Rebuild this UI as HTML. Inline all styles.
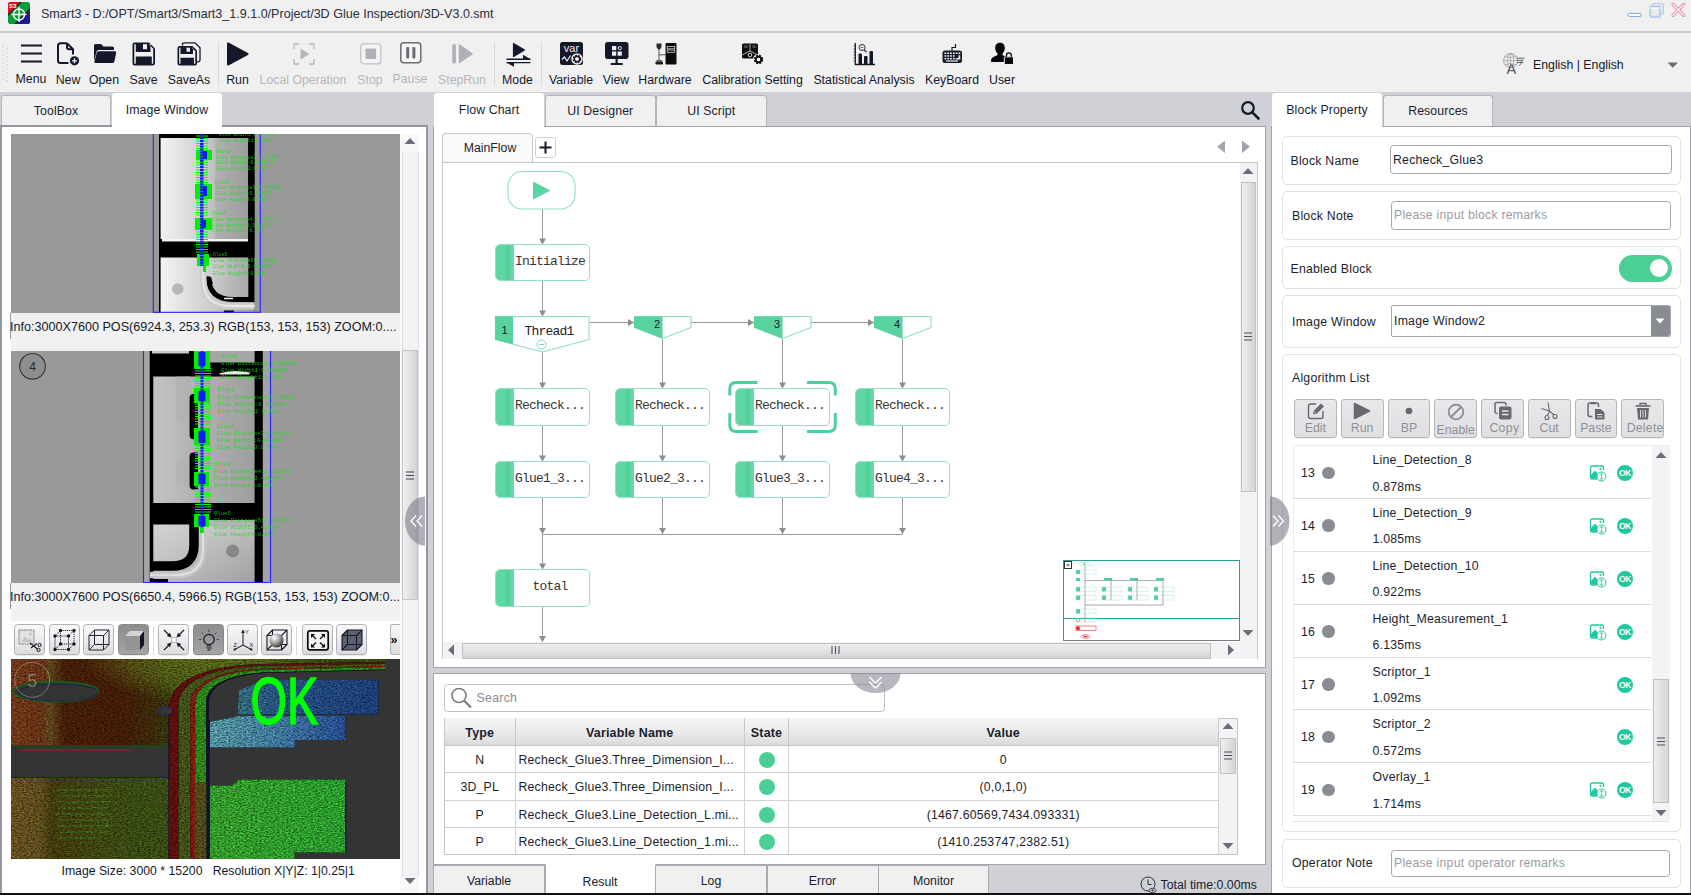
<!DOCTYPE html>
<html><head><meta charset="utf-8"><title>Smart3</title>
<style>
*{box-sizing:border-box;margin:0;padding:0}
html,body{width:1691px;height:895px;overflow:hidden;background:#f0f0f0;font-family:"Liberation Sans",sans-serif;font-size:12px;color:#1a1e2e}
.abs{position:absolute}
#root{position:relative;width:1691px;height:895px;overflow:hidden;background:#f0f0f0}
.t{position:absolute;white-space:nowrap;line-height:14px}
.tb-l{position:absolute;top:73px;font-size:12.3px;line-height:14px;white-space:nowrap;text-align:center;color:#14182a;transform:translateX(-50%)}
.tb-l.dis{color:#b4b6bc}
.tab{letter-spacing:0.100px;position:absolute;border:1px solid #b4b5bb;border-bottom:none;border-radius:3px 3px 0 0;background:#f0f0f0;text-align:center;font-size:12.3px;color:#1a1e2e;white-space:nowrap}
.tab.on{background:#fff;border-color:#fff}
.panel{position:absolute;background:#fff;border:1px solid #a9abb3}
.mono{font-family:"Liberation Mono",monospace}
svg{position:absolute;overflow:visible}
</style></head><body><div id="root">
<!-- TITLE BAR -->
<div class="abs" style="left:0;top:0;width:1691px;height:31px;background:#f0f0f0"></div>
<div class="abs" style="left:0;top:31px;width:1691px;height:2px;background:#c8c8c8"></div>
<svg style="left:8px;top:2px" width="22" height="22" viewBox="0 0 22 22">
<defs><clipPath id="lg"><rect x="0" y="0" width="22" height="22" rx="2.5"/></clipPath></defs>
<g clip-path="url(#lg)"><rect width="22" height="22" fill="#0a9a3c"/><polygon points="0,0 12,0 0,12" fill="#e01020"/><polygon points="22,8 22,22 8,22" fill="#1c1c90"/><polygon points="0,12 12,0 14,0 0,14" fill="#222"/><polygon points="8,22 22,8 22,6 6,22" fill="#222"/>
<circle cx="11" cy="12.5" r="5.5" fill="none" stroke="#fff" stroke-width="1.4"/><path d="M3.5 12.5H18.5M11 5V20" stroke="#fff" stroke-width="1.3"/></g>
<text x="1" y="6" font-size="6" font-weight="bold" fill="#fff" font-family="Liberation Sans,sans-serif">S3</text>
</svg>
<div class="t" style="left:41px;top:7px;font-size:12.550px;color:#2a2e3c">Smart3 - D:/OPT/Smart3/Smart3_1.9.1.0/Project/3D Glue Inspection/3D-V3.0.smt</div>
<!-- window controls -->
<svg style="left:1627px;top:2px" width="60" height="20" viewBox="0 0 60 20">
<rect x="0.800" y="11.400" width="13.600" height="3" rx="1.500" fill="#fff" stroke="#7aa6d8" stroke-width="1"/>
<rect x="25.600" y="1.600" width="10.800" height="10.600" rx="0.800" fill="#e0e8f0" stroke="#b4cce8" stroke-width="1"/>
<rect x="23.200" y="5" width="9.800" height="9.800" rx="0.800" fill="#ececec" stroke="#b8d0ea" stroke-width="2.200"/>
<path d="M22.500 6H33.500" stroke="#fff" stroke-width="1.200"/><path d="M22.300 4.300H33.800" stroke="#9cbce0" stroke-width="0.700"/>
<path d="M46 2.400L56.600 13.400M56.600 2.400L46 13.400" stroke="#e486b4" stroke-width="3" stroke-linecap="round"/>
<path d="M46 2.400L56.600 13.400M56.600 2.400L46 13.400" stroke="#fff" stroke-width="1.300" stroke-linecap="round"/>
</svg>
<!-- TAB STRIP BG -->
<div class="abs" style="left:0;top:92px;width:1691px;height:803px;background:#d0d1d6"></div>
<!-- TOOLBAR -->
<!-- grip -->
<svg style="left:1px;top:45px" width="9" height="38" viewBox="0 0 9 38"><g fill="#d4d4d6">
<rect x="1" y="1" width="1.500" height="1.500"/><rect x="5" y="3" width="1.500" height="1.500"/><rect x="1" y="5" width="1.500" height="1.500"/><rect x="5" y="7" width="1.500" height="1.500"/><rect x="1" y="9" width="1.500" height="1.500"/><rect x="5" y="11" width="1.500" height="1.500"/><rect x="1" y="13" width="1.500" height="1.500"/><rect x="5" y="15" width="1.500" height="1.500"/><rect x="1" y="17" width="1.500" height="1.500"/><rect x="5" y="19" width="1.500" height="1.500"/><rect x="1" y="21" width="1.500" height="1.500"/><rect x="5" y="23" width="1.500" height="1.500"/><rect x="1" y="25" width="1.500" height="1.500"/><rect x="5" y="27" width="1.500" height="1.500"/><rect x="1" y="29" width="1.500" height="1.500"/><rect x="5" y="31" width="1.500" height="1.500"/><rect x="1" y="33" width="1.500" height="1.500"/><rect x="5" y="35" width="1.500" height="1.500"/></g></svg>
<!-- Menu -->
<svg style="left:21px;top:42px" width="22" height="24" viewBox="0 0 22 24"><path d="M0 3.500H21M0 11.500H21M0 19.500H21" stroke="#14182a" stroke-width="1.800"/></svg>
<!-- New -->
<svg style="left:56px;top:42px" width="24" height="24" viewBox="0 0 24 24"><path d="M11 1.200H4.500Q2 1.200 2 3.700V18.500Q2 21 4.500 21H12.500M11 1.200L17 7.200V12.500M11 1.200V5Q11 7.200 13.200 7.200H17" fill="none" stroke="#14182a" stroke-width="2" stroke-linejoin="round"/><circle cx="18.500" cy="18.800" r="4.600" fill="#14182a"/><path d="M16 18.800H21M18.500 16.300V21.300" stroke="#f0f0f0" stroke-width="1.300"/></svg>
<!-- Open -->
<svg style="left:93px;top:42px" width="24" height="24" viewBox="0 0 24 24"><path d="M1 19V3.500Q1 2 2.500 2H8L10.500 4.500H19.500Q21 4.500 21 6V8H5.500Q4 8 3.600 9.500Z" fill="#14182a"/><path d="M5.800 9.200H22Q23.600 9.200 23.200 10.800L21.400 19.500Q21 21 19.500 21H2.500Q1 21 1.400 19.400L3.800 10.600Q4.200 9.200 5.800 9.200Z" fill="#14182a"/></svg>
<!-- Save -->
<svg style="left:132px;top:42px" width="24" height="24" viewBox="0 0 24 24"><path d="M2.500 0.500H17L23 6.500V21Q23 23.500 20.500 23.500H2.500Q0.500 23.500 0.500 21V2.500Q0.500 0.500 2.500 0.500Z" fill="#14182a"/><path d="M2.300 2.300H3.800V10H18.500V2.300H16.800L21.200 6.800V21.700H19.800V14.500H3.800V21.700H2.300Z" fill="#f0f0f0"/><rect x="11" y="2.200" width="4" height="5" fill="#f0f0f0"/></svg>
<!-- SaveAs -->
<svg style="left:177px;top:42px" width="24" height="24" viewBox="0 0 24 24"><path d="M5.500 3.500V2.500Q5.500 0.800 7.200 0.800H18L23 5.800V18Q23 19.800 21.200 19.800H20" fill="none" stroke="#14182a" stroke-width="1.300"/><path d="M2.500 4H15.500L20 8.500V21.500Q20 23.500 18 23.500H2.500Q0.500 23.500 0.500 21.500V6Q0.500 4 2.500 4Z" fill="#14182a"/><path d="M2.200 5.700H3.500V12H16V5.700H14.800L18.300 9.200V21.800H17V15.800H3.500V21.800H2.200Z" fill="#f0f0f0"/><rect x="9.500" y="5.700" width="3.500" height="4" fill="#f0f0f0"/></svg>
<!-- sep -->
<div class="abs" style="left:218px;top:42px;width:1px;height:44px;background:#d9d9dc"></div>
<!-- Run -->
<svg style="left:226px;top:42px" width="24" height="24" viewBox="0 0 24 24"><path d="M2 1.500V22.500L21.500 12Z" fill="#14182a" stroke="#14182a" stroke-width="2" stroke-linejoin="round"/></svg>
<!-- Local Operation -->
<svg style="left:293px;top:43px" width="22" height="22" viewBox="0 0 22 22"><path d="M1 6V1H6M16 1H21V6M21 16V21H16M6 21H1V16" fill="none" stroke="#b4b5bc" stroke-width="1.300"/><path d="M7.500 5.500V16.500L16.500 11Z" fill="#b4b5bc"/></svg>
<!-- Stop -->
<svg style="left:360px;top:43px" width="22" height="22" viewBox="0 0 22 22"><rect x="0.800" y="0.800" width="20" height="20" rx="3" fill="#f4f4f4" stroke="#c2c3c8" stroke-width="1.300"/><rect x="5.500" y="5.500" width="10.600" height="10.600" rx="1.200" fill="#b0b1b8"/></svg>
<!-- Pause -->
<svg style="left:400px;top:42px" width="22" height="22" viewBox="0 0 22 22"><rect x="0.800" y="0.800" width="20" height="20" rx="3" fill="#f6f6f6" stroke="#6c6d72" stroke-width="1.500"/><rect x="6.200" y="5" width="3" height="11.500" rx="1" fill="#6c6d72"/><rect x="12.400" y="5" width="3" height="11.500" rx="1" fill="#6c6d72"/></svg>
<!-- StepRun -->
<svg style="left:452px;top:43px" width="22" height="22" viewBox="0 0 22 22"><rect x="0.300" y="1" width="3.600" height="19.500" rx="1.500" fill="#b0b1b8"/><path d="M7.500 2V19.500L20 10.800Z" fill="#b0b1b8" stroke="#b0b1b8" stroke-width="1.500" stroke-linejoin="round"/></svg>
<div class="abs" style="left:494px;top:42px;width:1px;height:44px;background:#d9d9dc"></div>
<!-- Mode -->
<svg style="left:506px;top:42px" width="26" height="24" viewBox="0 0 26 24"><path d="M7.500 1.500V14.500L18.500 8Z" fill="#14182a" stroke="#14182a" stroke-width="1.200" stroke-linejoin="round"/><path d="M0.500 17.300H24.500M24.500 20.600H0.500" stroke="#14182a" stroke-width="1.400"/><path d="M24.500 17.300L17 12.800V17.300Z" fill="#14182a"/><path d="M0.500 20.600L8 24.800V20.600Z" fill="#14182a"/></svg>
<div class="abs" style="left:541px;top:42px;width:1px;height:44px;background:#d9d9dc"></div>
<!-- Variable -->
<svg style="left:560px;top:42px" width="24" height="24" viewBox="0 0 24 24"><rect x="0" y="0" width="23" height="23" rx="2.500" fill="#14182a"/><text x="11.500" y="9.800" font-size="11" text-anchor="middle" fill="#f0f0f0" font-family="Liberation Sans,sans-serif">var</text><path d="M2 17.500L4.500 15L7 19L10.500 13.500" fill="none" stroke="#f0f0f0" stroke-width="1.200"/><circle cx="17" cy="17" r="5.800" fill="#f0f0f0"/><circle cx="17" cy="17" r="3.200" fill="none" stroke="#14182a" stroke-width="2.200" stroke-dasharray="1.700 0.900"/><circle cx="17" cy="17" r="2.600" fill="none" stroke="#14182a" stroke-width="1.200"/></svg>
<!-- View -->
<svg style="left:605px;top:42px" width="24" height="24" viewBox="0 0 24 24"><rect x="0" y="0" width="23.500" height="17" rx="2.800" fill="#14182a"/><rect x="10.500" y="17" width="2.200" height="4.500" fill="#14182a"/><rect x="5.500" y="21" width="12.500" height="2" rx="1" fill="#14182a"/><rect x="7" y="4" width="4.200" height="4.200" fill="#f0f0f0"/><rect x="7" y="9.500" width="4.200" height="4.200" fill="#f0f0f0"/><rect x="12.600" y="9.500" width="4.200" height="4.200" fill="#f0f0f0"/><circle cx="14.700" cy="6.100" r="1.600" fill="none" stroke="#f0f0f0" stroke-width="1"/></svg>
<!-- Hardware -->
<svg style="left:655px;top:42px" width="22" height="24" viewBox="0 0 22 24"><rect x="10.500" y="1" width="11" height="21.500" rx="1" fill="#0c0c10"/><rect x="12.200" y="4.500" width="7.500" height="2.300" fill="none" stroke="#d0d0d0" stroke-width="0.800"/><rect x="12.200" y="8" width="7.500" height="2.300" fill="none" stroke="#d0d0d0" stroke-width="0.800"/><path d="M1.500 1.500H6.500V5L5 7.500H3L1.500 5Z" fill="#2a2a30"/><path d="M4 7.500V19.500M4 12.800H10.500" stroke="#444" stroke-width="0.900"/><rect x="0.500" y="19.500" width="7.500" height="3" rx="0.800" fill="#1c1c22"/><rect x="1.500" y="18" width="5.500" height="1.800" fill="#555"/></svg>
<!-- Calibration Setting -->
<svg style="left:742px;top:43px" width="22" height="22" viewBox="0 0 22 22"><path d="M1.500 0.500H14.500Q16 0.500 16 2V10.500L12 15.500H1.500Q0 15.500 0 14V2Q0 0.500 1.500 0.500Z" fill="#0c0c10"/><path d="M0 12L8 8L16 12M8 1V8" stroke="#f0f0f0" stroke-width="0.700" fill="none"/><circle cx="8" cy="12" r="1.800" fill="none" stroke="#f0f0f0" stroke-width="0.900"/><text x="1.800" y="5.200" font-size="3.500" fill="#aaa" font-family="Liberation Sans,sans-serif">3D</text><text x="10" y="5.200" font-size="3.500" fill="#aaa" font-family="Liberation Sans,sans-serif">3D</text><circle cx="16.500" cy="16.500" r="5.600" fill="#f0f0f0"/><circle cx="16.500" cy="16.500" r="3.300" fill="none" stroke="#0c0c10" stroke-width="2.800" stroke-dasharray="1.800 0.800"/><circle cx="16.500" cy="16.500" r="2.700" fill="none" stroke="#0c0c10" stroke-width="1.600"/></svg>
<!-- Statistical Analysis -->
<svg style="left:853px;top:42px" width="23" height="24" viewBox="0 0 23 24"><path d="M2.300 1V22.500H22" fill="none" stroke="#14182a" stroke-width="1.300"/><path d="M0.500 4H2.300M0.500 7H2.300M0.500 10H2.300M0.500 13H2.300M0.500 16H2.300M0.500 19H2.300" stroke="#14182a" stroke-width="0.700"/><rect x="5.500" y="11.500" width="3.500" height="11" rx="1" fill="#14182a"/><rect x="11" y="14" width="3.500" height="8.500" rx="1" fill="#14182a"/><rect x="16.500" y="9" width="3.500" height="13.500" rx="1" fill="#14182a"/><circle cx="9" cy="5.500" r="3" fill="none" stroke="#14182a" stroke-width="0.900"/><path d="M11.200 7.800L13.500 10.200" stroke="#14182a" stroke-width="1.100"/><path d="M7.700 5.500H10.300" stroke="#14182a" stroke-width="0.600"/></svg>
<!-- KeyBoard -->
<svg style="left:942px;top:43px" width="21" height="21" viewBox="0 0 21 21"><path d="M10 7.500V4.500H13.500V1" fill="none" stroke="#14182a" stroke-width="1.200"/><rect x="0.500" y="7.500" width="19.500" height="12.500" rx="2.500" fill="#14182a"/><g fill="#f0f0f0"><rect x="2.500" y="9.500" width="1.800" height="1.500"/><rect x="5.300" y="9.500" width="1.800" height="1.500"/><rect x="8.100" y="9.500" width="1.800" height="1.500"/><rect x="10.900" y="9.500" width="1.800" height="1.500"/><rect x="13.700" y="9.500" width="1.800" height="1.500"/><rect x="16.500" y="9.500" width="1.800" height="1.500"/><rect x="2.500" y="12.200" width="1.800" height="1.500"/><rect x="5.300" y="12.200" width="1.800" height="1.500"/><rect x="8.100" y="12.200" width="1.800" height="1.500"/><rect x="10.900" y="12.200" width="1.800" height="1.500"/><rect x="2.500" y="14.900" width="1.800" height="1.500"/><rect x="5.300" y="14.900" width="1.800" height="1.500"/><rect x="8.100" y="14.900" width="1.800" height="1.500"/><rect x="10.900" y="14.900" width="1.800" height="1.500"/><path d="M16.500 12.200H18.300V16.400H13.700V14.900H16.500Z"/><rect x="4" y="17.400" width="12" height="1.200"/></g></svg>
<!-- User -->
<svg style="left:991px;top:42px" width="23" height="23" viewBox="0 0 23 23"><path d="M9 0.800C12.200 0.800 13.800 3 13.800 6C13.800 8.500 12.800 10.500 11.500 11.500V13C13 14.200 17.500 15 18 18V19.500Q18 20 17.500 20H0.600Q0.100 20 0.100 19.500V18C0.500 15 5 14.200 6.500 13V11.500C5.200 10.500 4.200 8.500 4.200 6C4.200 3 5.800 0.800 9 0.800Z" fill="#08080c"/><rect x="13.300" y="14.800" width="9.200" height="7.700" rx="1" fill="#08080c" stroke="#f0f0f0" stroke-width="1"/><path d="M15.500 14.800V13.200Q15.500 10.800 17.900 10.800Q20.300 10.800 20.300 13.200V14.800" fill="none" stroke="#08080c" stroke-width="1.300"/></svg>
<!-- labels -->
<div class="tb-l" style="left:31px;top:72px">Menu</div>
<div class="tb-l" style="left:68px">New</div>
<div class="tb-l" style="left:104px">Open</div>
<div class="tb-l" style="left:143.500px">Save</div>
<div class="tb-l" style="left:189px">SaveAs</div>
<div class="tb-l" style="left:237.500px">Run</div>
<div class="tb-l dis" style="left:303px">Local Operation</div>
<div class="tb-l dis" style="left:370px">Stop</div>
<div class="tb-l dis" style="left:410px;top:72px">Pause</div>
<div class="tb-l dis" style="left:462px">StepRun</div>
<div class="tb-l" style="left:517.500px">Mode</div>
<div class="tb-l" style="left:571px">Variable</div>
<div class="tb-l" style="left:616px">View</div>
<div class="tb-l" style="left:665px">Hardware</div>
<div class="tb-l" style="left:752.500px">Calibration Setting</div>
<div class="tb-l" style="left:864px">Statistical Analysis</div>
<div class="tb-l" style="left:952px">KeyBoard</div>
<div class="tb-l" style="left:1002px">User</div>
<!-- language -->
<svg style="left:1503px;top:53px" width="24" height="24" viewBox="0 0 24 24"><circle cx="7.600" cy="7.600" r="7" fill="#f0f0f0" stroke="#8e8e94" stroke-width="0.800"/><path d="M0.600 7.600H14.600M7.600 0.600V14.600M2 3.500Q7.600 5.800 13.200 3.500M2 11.700Q7.600 9.400 13.200 11.700" fill="none" stroke="#8e8e94" stroke-width="0.600"/><ellipse cx="7.600" cy="7.600" rx="3.200" ry="7" fill="none" stroke="#8e8e94" stroke-width="0.600"/><text x="3.600" y="20.600" font-size="14.500" fill="#2a2a2e" stroke="#f0f0f0" stroke-width="0.250" font-family="Liberation Sans,sans-serif">A</text><path d="M13.500 5.200H21.500M14.500 7.300H20.500M14 9.500H20.500M18.500 7.300V9.500L16.500 12.500" fill="none" stroke="#4a4a50" stroke-width="0.800"/></svg>
<div class="t" style="left:1533px;top:57.500px;font-size:12.300px;color:#14182a">English | English</div>
<svg style="left:1667px;top:62px" width="12" height="7" viewBox="0 0 12 7"><path d="M0.500 0.500H11L5.800 5.800Z" fill="#666a76"/></svg>
<!-- LEFT PANEL -->
<div class="tab" style="left:1px;top:95px;width:110px;height:32px;line-height:30px">ToolBox</div>
<div class="tab on" style="left:112px;top:93px;width:110px;height:34px;line-height:32px">Image Window</div>
<div class="abs" style="left:0;top:125px;width:428px;height:768px;background:#fff;border:2px solid #94969e;border-bottom:none"></div>
<div class="abs" style="left:112px;top:125px;width:110px;height:2px;background:#fff"></div>
<!-- strip bg behind info lines -->
<div class="abs" style="left:11px;top:313px;width:389px;height:38px;background:#f1f1f1"></div>
<div class="abs" style="left:11px;top:583px;width:389px;height:38px;background:#f1f1f1"></div>
<!-- IMAGE 1 -->
<svg style="left:11px;top:134px" width="389" height="179" viewBox="11 134 389 179">
<defs>
<linearGradient id="g1a" x1="0" x2="1" y1="0" y2="0"><stop offset="0" stop-color="#f2f2f2"/><stop offset="0.45" stop-color="#d2d2d2"/><stop offset="0.62" stop-color="#bdbdbd"/><stop offset="0.63" stop-color="#b0b0b0"/><stop offset="1" stop-color="#9c9c9c"/></linearGradient>
<linearGradient id="g1b" x1="0" x2="1" y1="0" y2="0"><stop offset="0" stop-color="#f4f4f4"/><stop offset="0.5" stop-color="#cfcfcf"/><stop offset="1" stop-color="#a2a2a2"/></linearGradient>
<clipPath id="c1"><rect x="11" y="134" width="389" height="179"/></clipPath>
</defs>
<g clip-path="url(#c1)">
<rect x="11" y="134" width="389" height="179" fill="#999999"/>
<rect x="159" y="134" width="95.600" height="178" fill="#000"/>
<rect x="160.600" y="138" width="87.600" height="101" fill="url(#g1a)"/>
<rect x="162" y="239" width="86" height="2.500" fill="#f4f4f4"/>
<rect x="160.600" y="257.500" width="94" height="55" fill="url(#g1b)"/>
<circle cx="177.800" cy="289" r="5.800" fill="#b6b6b6"/>
<!-- tube -->
<rect x="248.300" y="134" width="6" height="168" fill="#000"/>
<path d="M208.500 277Q209 299.500 233 299.500H252" fill="none" stroke="#000" stroke-width="5"/>
<path d="M207 276L211 277L213 284L208 284Z" fill="#000"/>
<path d="M203.300 262V280Q203.300 306 231 306H254.600" fill="none" stroke="#cecece" stroke-width="6.500"/>
<path d="M203.300 262V280Q203.300 306 231 306H254.600" fill="none" stroke="#e8e8e8" stroke-width="1.800"/>
<path d="M224 298.500H233" stroke="#f0f0f0" stroke-width="1.500"/>
<rect x="224" y="310.500" width="10" height="2" fill="#000"/>
<!-- green / blue stack -->
<g stroke="#00ff00" stroke-width="1.100">
<path d="M196 136H208M196 138.500H208M196 141H208M196 143.500H208M196 146H208M196 148.500H208M196 160H208M196 162.500H208M196 165H208M196 167.500H208M196 170H208M196 172.500H208M196 175H208M196 177.500H208M196 180H208M196 182.500H208M196 200H208M196 202.500H208M196 205H208M196 207.500H208M196 210H208M196 212.500H208M196 215H208M196 232H208M196 234.500H208M196 237H208M196 239.500H208M196 242H208M196 244.500H208M196 247H208M196 249.500H208M196 252H208"/></g>
<g fill="#00ee00"><rect x="196" y="150" width="16" height="10"/><rect x="195" y="184" width="17" height="15"/><rect x="195" y="218" width="17" height="12"/><rect x="197" y="254" width="12" height="12"/><rect x="203" y="266" width="3" height="6"/></g>
<path d="M201.800 134V266" stroke="#1418ff" stroke-width="3.500" stroke-dasharray="2.200 0.700"/>
<g fill="#1418ff"><rect x="203" y="151" width="4" height="8"/><rect x="203" y="186" width="4" height="10"/><rect x="201" y="220" width="5" height="8"/></g>
<rect x="153.300" y="120" width="107" height="192.300" fill="none" stroke="#2424ff" stroke-width="1.100"/>
<g font-family="Liberation Mono,monospace" font-size="4.800" fill="#16e016" opacity="0.800">
<text x="219" y="135.500">Glue Width1:0.473953</text><text x="219" y="141.500">Glue Height1:0.482</text>
<text x="216" y="153">Glue2</text><text x="216" y="158.600">Glue Distance2:0.72407</text><text x="216" y="164">Glue Width2:0.528813</text><text x="216" y="170">Glue Height2:0.325</text>
<text x="215" y="183.500">Glue3</text><text x="215" y="189">Glue Distance3:0.736539</text><text x="215" y="195">Glue Width3:0.531532</text><text x="215" y="201">Glue Height3:0.379</text>
<text x="212" y="214.500">Glue4</text><text x="212" y="220.500">Glue Distance4:0.97248</text><text x="212" y="226.500">Glue Width4:0.525224</text><text x="212" y="232">Glue Height4:0.488</text>
<text x="213" y="256">Glue5</text><text x="213" y="262">Glue Distance5:0.74339</text><text x="213" y="268">Glue Width5:0.488532</text><text x="213" y="274.500">Glue Height5:0.478</text>
</g>
</g></svg>
<div class="abs" style="left:10px;top:313px;width:1px;height:26px;background:#9a9a9a"></div>
<div class="t" style="left:10px;top:320px;font-size:12.600px;color:#14182a">Info:3000X7600 POS(6924.3, 253.3) RGB(153, 153, 153) ZOOM:0....</div>
<!-- IMAGE 2 -->
<svg style="left:11px;top:351px" width="389" height="232" viewBox="11 351 389 232">
<defs>
<linearGradient id="g2a" x1="0" x2="1" y1="0" y2="0"><stop offset="0" stop-color="#c4c4c4"/><stop offset="0.350" stop-color="#b4b4b4"/><stop offset="1" stop-color="#9e9e9e"/></linearGradient>
<linearGradient id="g2b" x1="0" x2="1" y1="0" y2="1"><stop offset="0" stop-color="#d4d4d4"/><stop offset="0.5" stop-color="#bcbcbc"/><stop offset="1" stop-color="#a0a0a0"/></linearGradient>
<clipPath id="c2"><rect x="11" y="351" width="389" height="232"/></clipPath>
</defs>
<g clip-path="url(#c2)">
<rect x="11" y="351" width="389" height="232" fill="#999999"/>
<rect x="143.500" y="351" width="127" height="232" fill="#a4a4a4"/>
<rect x="149.700" y="351" width="113.100" height="232" fill="#000"/>
<rect x="153.300" y="376.500" width="101.300" height="126.500" fill="url(#g2a)"/>
<rect x="210" y="351" width="44.600" height="11.500" fill="#a6a6a6"/>
<rect x="152" y="351" width="37" height="2.500" fill="#c6c6c6"/>
<path d="M219 373.500Q232 369 250 372.500L249 374.500H220Z" fill="#e8e8e8"/>
<path d="M176.500 376.500H190V423H180.500Q176.500 423 176.500 419Z" fill="#b0b0b0" opacity="0.700"/>
<path d="M180.500 460.500H190V485H176.500V464.500Q176.500 460.500 180.500 460.500Z" fill="#b0b0b0" opacity="0.700"/>
<path d="M198 394H193.500Q189.600 394 189.600 398V435Q189.600 439.300 193.500 439.300H198Z" fill="#000"/>
<path d="M198 452.500H193.500Q189.600 452.500 189.600 456.500V485.500Q189.600 489.500 193.500 489.500H198Z" fill="#000"/>
<rect x="197" y="505" width="57.600" height="15.500" fill="#000"/>
<rect x="153.300" y="524.500" width="101.300" height="58.500" fill="url(#g2b)"/>
<rect x="205" y="520" width="49.600" height="6" fill="#b4b4b4"/>
<circle cx="232.700" cy="551" r="6" fill="#888" stroke="#777" stroke-width="0.600"/>
<!-- tube -->
<path d="M194 524V545Q194 566 172 566H150" fill="none" stroke="#000" stroke-width="9.500"/>
<path d="M203 528V549Q203 575 176 575H150" fill="none" stroke="#c6c6c6" stroke-width="6.500"/>
<path d="M203 528V549Q203 575 176 575H150" fill="none" stroke="#e6e6e6" stroke-width="1.600"/>
<rect x="150" y="579" width="18" height="4" fill="#000"/>
<!-- stack -->
<g stroke="#00ff00" stroke-width="1.100">
<path d="M195 366H211M195 368.500H211M195 371H211M195 373.500H211M195 376H211M195 378.500H211M195 381H211M195 383.500H211M195 386H211M195 404H211M195 406.500H211M195 409H211M195 411.500H211M195 414H211M195 416.500H211M195 419H211M195 421.500H211M195 424H211M195 446H211M195 448.500H211M195 451H211M195 453.500H211M195 456H211M195 458.500H211M195 461H211M195 463.500H211M195 466H211M195 468.500H211M195 487H211M195 489.500H211M195 492H211M195 494.500H211M195 497H211M195 499.500H211M195 502H211M195 504.500H211M195 507H211M195 509.500H211M195 512H211"/></g>
<g fill="#00ee00"><rect x="194" y="351" width="16" height="18"/><rect x="194" y="388" width="16" height="15"/><rect x="194" y="428" width="16" height="17"/><rect x="194" y="472" width="15" height="14"/><rect x="194" y="514" width="15" height="13"/><rect x="200" y="527" width="4" height="6"/></g>
<path d="M202 351V528" stroke="#1418ff" stroke-width="3" stroke-dasharray="2.200 0.700"/>
<g fill="#1418ff"><rect x="198.500" y="352" width="7" height="14"/><rect x="198.500" y="391" width="7" height="10"/><rect x="198.500" y="431" width="7" height="12"/><rect x="198.500" y="474" width="7" height="10"/><rect x="198.500" y="516" width="7" height="10"/></g>
<rect x="143.500" y="340" width="127" height="242.600" fill="none" stroke="#2424ff" stroke-width="1.100"/>
<g font-family="Liberation Mono,monospace" font-size="5.600" fill="#16e016" opacity="0.800">
<text x="221" y="357.500">Glue1</text><text x="221" y="365">Glue Distance1:0.994647</text><text x="221" y="372">Glue Width1:0.394084</text><text x="221" y="379">Glue Height1:0.470</text>
<text x="218" y="391">Glue2</text><text x="218" y="398.500">Glue Distance2:0.962896</text><text x="218" y="405.500">Glue Width2:0.423598</text><text x="218" y="412.500">Glue Height2:0.444</text>
<text x="217" y="428">Glue3</text><text x="217" y="435">Glue Distance3:0.99622</text><text x="217" y="442">Glue Width3:0.432987</text><text x="217" y="449">Glue Height3:0.384</text>
<text x="214" y="466">Glue4</text><text x="214" y="473">Glue Distance4:1.061138</text><text x="214" y="480">Glue Width4:0.486083</text><text x="214" y="487">Glue Height4:0.399</text>
<text x="214" y="515">Glue5</text><text x="214" y="522">Glue Distance5:1.002067</text><text x="214" y="529">Glue Width5:0.439227</text><text x="214" y="536">Glue Height5:0.419</text>
</g>
<circle cx="32.500" cy="366.300" r="12.800" fill="#8e8e8e" stroke="#333" stroke-width="1.100"/>
<text x="32.500" y="370.500" font-size="12" text-anchor="middle" fill="#2a2a2a" font-family="Liberation Sans,sans-serif">4</text>
</g></svg>
<div class="abs" style="left:10px;top:583px;width:1px;height:26px;background:#9a9a9a"></div>
<div class="t" style="left:10px;top:590px;font-size:12.600px;color:#14182a">Info:3000X7600 POS(6650.4, 5966.5) RGB(153, 153, 153) ZOOM:0...</div>
<!-- 3D toolbar -->
<style>
.b3{position:absolute;top:624px;width:31px;height:31px;border:1px solid #b2b2b6;border-radius:3.500px;background:linear-gradient(#f8f8f8,#ececec 50%,#dcdcdc);box-shadow:0 0.500px 0.500px rgba(0,0,0,.15)}
.b3.dn{background:linear-gradient(#8e8e90,#989899 50%,#a4a4a6);border-color:#8a8a8c}
.b3 svg{left:3px;top:3px}
</style>
<div class="abs" style="left:11px;top:621px;width:389px;height:38px;background:#fff"></div>
<div class="b3" style="left:14px"><svg width="24" height="24" viewBox="0 0 24 24"><rect x="1" y="2" width="15" height="14" fill="#e2e2e2" stroke="#5a5c68" stroke-width="0.900" stroke-dasharray="1.500 0.800"/><path d="M3 14L7 8.500L10 12L12 10L14.500 14Z" fill="#c4c4c6"/><circle cx="12.500" cy="6" r="1.500" fill="#c4c4c6"/><path d="M12 15L19.500 21M13 20L19 15.500" stroke="#14182a" stroke-width="1.100"/><circle cx="20.500" cy="22" r="1.600" fill="none" stroke="#14182a" stroke-width="1"/><circle cx="21.500" cy="17" r="1.600" fill="none" stroke="#14182a" stroke-width="1"/></svg></div>
<div class="b3" style="left:48.500px"><svg width="24" height="24" viewBox="0 0 24 24"><g fill="none" stroke="#14182a" stroke-width="0.900" stroke-dasharray="1.300 0.800"><rect x="2" y="8" width="13.500" height="13.500"/><rect x="7.500" y="2.500" width="13.500" height="13.500"/><path d="M2 8L7.500 2.500M15.500 8L21 2.500M2 21.500L7.500 16M15.500 21.500L21 16"/></g><g fill="#14182a"><circle cx="2" cy="8" r="1.700"/><circle cx="15.500" cy="8" r="1.700"/><circle cx="2" cy="21.500" r="1.700"/><circle cx="15.500" cy="21.500" r="1.700"/><circle cx="7.500" cy="2.500" r="1.700"/><circle cx="21" cy="2.500" r="1.700"/><circle cx="7.500" cy="16" r="1.700"/><circle cx="21" cy="16" r="1.700"/></g></svg></div>
<div class="b3" style="left:83px"><svg width="24" height="24" viewBox="0 0 24 24"><g fill="none" stroke="#1e2236" stroke-width="1" stroke-linejoin="round"><rect x="2" y="7.500" width="14.500" height="14.500"/><rect x="7.500" y="2" width="14.500" height="14.500"/><path d="M2 7.500L7.500 2M16.500 7.500L22 2M2 22L7.500 16.500M16.500 22L22 16.500"/></g></svg></div>
<div class="b3 dn" style="left:117.500px"><svg width="24" height="24" viewBox="0 0 24 24"><path d="M3 8L8 3H22L18 8Z" fill="#d4d4d4"/><rect x="3" y="8" width="15" height="14" fill="#949496"/><path d="M18 8L22 3V17L18 22Z" fill="#10142a"/></svg></div>
<div class="abs" style="left:153px;top:626px;width:1px;height:29px;background:#dcdcde"></div>
<div class="b3" style="left:158px"><svg width="24" height="24" viewBox="0 0 24 24"><rect x="9.800" y="9.800" width="4.400" height="4.400" fill="#fff" stroke="#999" stroke-width="0.700"/><g stroke="#14182a" stroke-width="1.200"><path d="M2 2L8 8M22 2L16 8M2 22L8 16M22 22L16 16"/></g><g fill="#14182a"><path d="M9.500 9.500L4.800 8L8 4.800Z"/><path d="M14.500 9.500L19.200 8L16 4.800Z"/><path d="M9.500 14.500L4.800 16L8 19.200Z"/><path d="M14.500 14.500L19.200 16L16 19.200Z"/></g></svg></div>
<div class="b3 dn" style="left:192.500px"><svg width="24" height="24" viewBox="0 0 24 24"><circle cx="12" cy="11.500" r="5.200" fill="none" stroke="#14182a" stroke-width="1.200"/><path d="M9.500 18H14.500M9.500 20H14.500M10.500 22H13.500" stroke="#14182a" stroke-width="1.200"/><g stroke="#3a3e4e" stroke-width="0.900"><path d="M12 1.500V4M4.500 4.500L6.500 6.500M19.500 4.500L17.500 6.500M2 11.500H4.500M22 11.500H19.500"/></g></svg></div>
<div class="b3" style="left:227px"><svg width="24" height="24" viewBox="0 0 24 24"><path d="M12 3V17L3 22M12 17L21 22" fill="none" stroke="#2a2e42" stroke-width="1.100"/><path d="M12 1.500L10.200 5H13.800Z M2 22.600L4 19.800L5.300 22Z M22 22.600L20 19.800L18.700 22Z" fill="#14182a"/><text x="14" y="6" font-size="5.500" fill="#14182a" font-family="Liberation Sans,sans-serif">Y</text><text x="2.500" y="18.500" font-size="5.500" fill="#14182a" font-family="Liberation Sans,sans-serif">Z</text><text x="18.500" y="18.500" font-size="5.500" fill="#14182a" font-family="Liberation Sans,sans-serif">X</text></svg></div>
<div class="b3" style="left:261px"><svg width="24" height="24" viewBox="0 0 24 24"><defs><radialGradient id="sph" cx="0.350" cy="0.300" r="0.800"><stop offset="0" stop-color="#fff"/><stop offset="0.450" stop-color="#a8a8a8"/><stop offset="1" stop-color="#202020"/></radialGradient></defs><g fill="none" stroke="#14182a" stroke-width="1.100" stroke-linejoin="round"><rect x="2" y="7.500" width="14.500" height="14.500"/><rect x="7.500" y="2" width="14.500" height="14.500"/><path d="M2 7.500L7.500 2M16.500 7.500L22 2M2 22L7.500 16.500M16.500 22L22 16.500"/></g><circle cx="11.500" cy="12.500" r="7" fill="url(#sph)"/></svg></div>
<div class="abs" style="left:296px;top:626px;width:1px;height:29px;background:#dcdcde"></div>
<div class="b3" style="left:302px"><svg width="24" height="24" viewBox="0 0 24 24"><rect x="1.800" y="2.800" width="20.400" height="19" rx="2" fill="#f4f4f4" stroke="#0c0c10" stroke-width="1.700"/><g stroke="#0c0c10" stroke-width="1.300"><path d="M6 7L10 11M18 7L14 11M6 18.500L10 14.500M18 18.500L14 14.500"/></g><g fill="#0c0c10"><path d="M5 6V10L9 6Z M19 6V10L15 6Z M5 19.500V15.500L9 19.500Z M19 19.500V15.500L15 19.500Z"/></g></svg></div>
<div class="b3" style="left:336px"><svg width="24" height="24" viewBox="0 0 24 24"><path d="M2 7.500L7.500 2H22V16.500L16.500 22H2Z" fill="#5c6070"/><g fill="none" stroke="#14182a" stroke-width="1.100" stroke-linejoin="round"><rect x="2" y="7.500" width="14.500" height="14.500"/><rect x="7.500" y="2" width="14.500" height="14.500"/><path d="M2 7.500L7.500 2M16.500 7.500L22 2M2 22L7.500 16.500M16.500 22L22 16.500"/></g></svg></div>
<div class="abs" style="left:390px;top:624px;width:10px;height:31px;border:1px solid #b2b2b6;border-right:none;border-radius:3px 0 0 3px;background:linear-gradient(#f8f8f8,#dcdcdc)"></div>
<div class="t" style="left:390.500px;top:632.500px;font-size:12.500px;font-weight:bold;color:#0c1020;letter-spacing:-0.500px">»</div>
<!-- IMAGE 3 -->
<svg style="left:11px;top:659px" width="389" height="200" viewBox="11 659 389 200">
<defs>
<filter id="nz" x="0" y="0" width="1" height="1" color-interpolation-filters="sRGB"><feTurbulence type="fractalNoise" baseFrequency="0.450 0.800" numOctaves="2" seed="7" result="n"/><feColorMatrix in="n" type="matrix" values="1 1 0 0 -0.500  1 1 0 0 -0.500  1 1 0 0 -0.500  0 0 0 0 1" result="m"/><feComposite in="SourceGraphic" in2="m" operator="arithmetic" k1="1.100" k2="0.450" k3="0" k4="0"/></filter>
<linearGradient id="g3a" x1="11" x2="386" y1="0" y2="0" gradientUnits="userSpaceOnUse"><stop offset="0" stop-color="#6e3719"/><stop offset="0.080" stop-color="#653116"/><stop offset="0.105" stop-color="#5b441b"/><stop offset="0.140" stop-color="#441d0a"/><stop offset="0.300" stop-color="#411b08"/><stop offset="0.380" stop-color="#3a290c"/><stop offset="0.430" stop-color="#333a0d"/><stop offset="0.600" stop-color="#35460f"/><stop offset="1" stop-color="#314d11"/></linearGradient>
<radialGradient id="g3v" cx="200" cy="655" r="120" gradientUnits="userSpaceOnUse" gradientTransform="translate(200 655) scale(1 0.400) translate(-200 -655)"><stop offset="0" stop-color="#5c6c1a" stop-opacity="0.850"/><stop offset="0.600" stop-color="#5c6c1a" stop-opacity="0.550"/><stop offset="1" stop-color="#5c6c1a" stop-opacity="0"/></radialGradient>
<linearGradient id="g3b" x1="11" x2="170" y1="0" y2="0" gradientUnits="userSpaceOnUse"><stop offset="0" stop-color="#674c20"/><stop offset="0.180" stop-color="#5a4c1c"/><stop offset="0.260" stop-color="#40390f"/><stop offset="0.600" stop-color="#3b4711"/><stop offset="1" stop-color="#364c14"/></linearGradient>
<linearGradient id="g3c" x1="0" x2="1" y1="0" y2="0"><stop offset="0" stop-color="#336977"/><stop offset="0.300" stop-color="#254e7c"/><stop offset="1" stop-color="#1c3b75"/></linearGradient>
<linearGradient id="g3d" x1="0" x2="1" y1="0" y2="0"><stop offset="0" stop-color="#519199"/><stop offset="0.500" stop-color="#3d7597"/><stop offset="1" stop-color="#25488c"/></linearGradient>
<linearGradient id="g3e" x1="0" x2="1" y1="0" y2="0"><stop offset="0" stop-color="#34962a"/><stop offset="1" stop-color="#2a982e"/></linearGradient>
<clipPath id="c3"><rect x="11" y="659" width="389" height="200"/></clipPath>
</defs>
<g clip-path="url(#c3)">
<rect x="11" y="659" width="389" height="200" fill="#343434"/>
<g filter="url(#nz)">
<path d="M11 659H386V661.8L262.0 664.0C204.7 664.8 169.5 680.8 169.5 706.0V745H11Z" fill="url(#g3a)"/>
<path d="M11 659H386V661.8L262.0 664.0C204.7 664.8 169.5 680.8 169.5 706.0V745H11Z" fill="url(#g3v)"/>
<rect x="11" y="778" width="159" height="81" fill="url(#g3b)"/>
<g stroke="#3c7a1c" stroke-width="1.200" opacity="0.800"><path d="M56 790H112M58 796H110M56 802H112M58 808H108M56 814H112M58 820H110M56 826H112M58 832H108M56 838H100"/></g>
<path d="M264 680H378.500V714.600H237.500L239 690Z" fill="url(#g3c)"/>
<path d="M209.600 722L239 716H345.300V740H295V747.500H209.600Z" fill="url(#g3d)"/>
<path d="M210 785.500H232L239 779.500H345.400V852.500H294.600V859H210Z" fill="url(#g3e)"/>
<path d="M169.5 859V706.0C169.5 680.8 204.7 664.8 262.0 664.0L386.0 661.8L386.0 663.7L264.3 666.0C211.2 666.8 178.6 681.6 178.6 705.1V859Z" fill="#5c0e0e"/>
<path d="M178.6 859V705.1C178.6 681.6 211.2 666.8 264.3 666.0L386.0 663.7L386.0 666.1L267.3 668.7C219.6 669.5 190.4 682.8 190.4 703.9V859Z" fill="#3e5016"/>
<path d="M190.4 859V703.9C190.4 682.8 219.6 669.5 267.3 668.7L386.0 666.1L386.0 667.1L268.5 669.7C223.0 670.5 195.2 683.2 195.2 703.4V859Z" fill="#7c1812"/>
<path d="M195.2 859V703.4C195.2 683.2 223.0 670.5 268.5 669.7L386.0 667.1L386.0 669.4L271.3 672.2C231.0 673.0 206.2 684.2 206.2 702.3V859Z" fill="#2a8018"/>
<path d="M206.2 859V702.3C206.2 684.2 231.0 673.0 271.3 672.2L386.0 669.4L386.0 670.0L272.0 672.8C232.9 673.6 209.0 684.5 209.0 702.0V859Z" fill="#10142c"/>
<rect x="195.2" y="782" width="11.1" height="77" fill="#4c4818"/>
</g>
<path d="M11 746H169" stroke="#1a4a10" stroke-width="1.500"/><path d="M20 750H130" stroke="#b02020" stroke-width="0.800"/>
<path d="M11 777.500H169" stroke="#102060" stroke-width="1"/>
<path d="M168.800 704V859" stroke="#101030" stroke-width="1"/><path d="M209.300 720V859" stroke="#101050" stroke-width="1.300"/>
<path d="M345.800 782V852" stroke="#101060" stroke-width="1"/>
<ellipse cx="56" cy="691.500" rx="42.500" ry="9.800" fill="#343434" stroke="#1a5a1a" stroke-width="2"/>
<ellipse cx="58" cy="692.500" rx="40" ry="8.500" fill="#343434" stroke="#102060" stroke-width="0.800"/>
<ellipse cx="165" cy="711" rx="7" ry="4" fill="#343434" stroke="#103070" stroke-width="1"/>
<circle cx="32.200" cy="679.800" r="17.500" fill="none" stroke="#9a9a8a" stroke-width="0.800" opacity="0.800"/>
<text x="32.200" y="687" font-size="18" text-anchor="middle" fill="#8a8a7a" opacity="0.850" font-family="Liberation Sans,sans-serif">5</text>
<text x="0" y="0" transform="translate(250.500,723.500) scale(0.700,1)" font-size="67" fill="#00ff00" stroke="#00ff00" stroke-width="1.600" font-family="Liberation Sans,sans-serif">OK</text>
</g></svg>
<div class="t" style="left:61.500px;top:863.500px;font-size:12.250px;color:#14182a">Image Size: 3000 * 15200&nbsp;&nbsp; Resolution X|Y|Z: 1|0.25|1</div>
<!-- left scrollbar -->
<div class="abs" style="left:400px;top:134px;width:19px;height:759px;background:#f8f8f8"></div><div class="abs" style="left:401.500px;top:152px;width:17px;height:725px;background:#f3f3f5;border-left:1px solid #e0e0e4;border-right:1px solid #e0e0e4"></div>
<div class="abs" style="left:402px;top:350px;width:16px;height:250px;background:linear-gradient(90deg,#f0f0f0,#e2e2e4 50%,#d2d2d4);border:1px solid #c4c4c8"></div>
<svg style="left:404px;top:137px" width="12" height="8" viewBox="0 0 12 8"><path d="M0.500 7H11.500L6 1Z" fill="#6a6e7c"/></svg>
<svg style="left:404px;top:877px" width="12" height="8" viewBox="0 0 12 8"><path d="M0.500 1H11.500L6 7Z" fill="#6a6e7c"/></svg>
<svg style="left:406px;top:471px" width="8" height="9" viewBox="0 0 8 9"><path d="M0 1H8M0 4.500H8M0 8H8" stroke="#3c4050" stroke-width="1.200"/></svg>

<!-- collapse handle -->
<svg style="left:405px;top:496px" width="20" height="50" viewBox="0 0 20 50"><path d="M20 0.500A20 24.500 0 0 0 20 49.500Z" fill="#7e808c" opacity="0.620"/><path d="M11 19.500L6 25L11 30.500M17 19.500L12 25L17 30.500" fill="none" stroke="#fff" stroke-width="1.300"/></svg>
<!-- CENTER PANEL -->
<style>
.nd{position:absolute;width:95px;height:37.500px;border:1px solid #93e2c0;border-radius:5px;background:#fff;overflow:hidden}
.nd i{position:absolute;left:0;top:0;bottom:0;width:18px;background:linear-gradient(90deg,#60d6a5 0,#60d6a5 50%,#52d19c 54%,#52d19c 76%,#66d8a8 80%)}
.nd b{position:absolute;left:19px;right:4px;top:10px;text-align:center;font-weight:normal;font-family:"Liberation Mono",monospace;font-size:13px;letter-spacing:-0.800px;line-height:14px;color:#363636;white-space:nowrap}
</style>
<div class="tab on" style="left:434px;top:93px;width:110px;height:34px;line-height:32px">Flow Chart</div>
<div class="tab" style="left:545px;top:95px;width:110.500px;height:32px;line-height:30px">UI Designer</div>
<div class="tab" style="left:656px;top:95px;width:110.500px;height:32px;line-height:30px">UI Script</div>
<div class="abs" style="left:433px;top:126px;width:833px;height:542px;background:#fff;border:1px solid #a3a5ad"></div>
<div class="abs" style="left:434px;top:125px;width:110px;height:3px;background:#fff"></div>
<!-- search icon -->
<svg style="left:1240px;top:100px" width="20" height="20" viewBox="0 0 20 20"><circle cx="8" cy="8" r="5.800" fill="none" stroke="#14182a" stroke-width="2.200"/><path d="M12.300 12.300L18.500 18.500" stroke="#14182a" stroke-width="2.600" stroke-linecap="round"/></svg>
<!-- MainFlow tab -->
<div class="abs" style="left:442px;top:133px;width:91px;height:30px;background:#fafafa;border:1px solid #c8c8cc;border-bottom:none;border-radius:4px 4px 0 0;text-align:center;line-height:29px;font-size:12.300px;padding-left:5px;color:#1a1e2e">MainFlow</div>
<div class="abs" style="left:534.500px;top:137px;width:21px;height:21px;background:#fff;border:1px solid #d0d0d4;border-radius:3px"></div>
<svg style="left:538.500px;top:141px" width="13" height="13" viewBox="0 0 13 13"><path d="M6.500 0.500V12.500M0.500 6.500H12.500" stroke="#14182a" stroke-width="2"/></svg>
<svg style="left:1216px;top:140px" width="36" height="14" viewBox="0 0 36 14"><path d="M9 0.500V13L1 6.800Z M26 0.500V13L34 6.800Z" fill="#a3a5ad"/></svg>
<!-- canvas -->
<div class="abs" style="left:442px;top:162px;width:816px;height:497px;background:#fff;border:1px solid #c8c8cc"></div>
<!-- connectors -->
<svg style="left:443px;top:163px" width="797" height="479" viewBox="443 163 797 479">
<g fill="none" stroke="#9a9a9a" stroke-width="1">
<path d="M542.500 209V244M542.500 281V316M542.500 352V388M542.500 426V461M542.500 498V569M542.500 607V642"/>
<path d="M662.500 338V388M662.500 426V461M662.500 498V534"/>
<path d="M782.500 338V388M782.500 426V461M782.500 498V534"/>
<path d="M902.500 338V388M902.500 426V461M902.500 498V534"/>
<path d="M590 322.500H634M691 322.500H754M811 322.500H874"/>
<path d="M542.500 534.500H902.500"/>
</g>
<g fill="#8c8c8c">
<path d="M539 238.500H546L542.500 244.500Z M539 310.500H546L542.500 316.500Z M539 382.500H546L542.500 388.500Z M539 455.500H546L542.500 461.500Z M539 528H546L542.500 534Z M539 563.500H546L542.500 569.500Z M539 636H546L542.500 642Z"/>
<path d="M659 382.500H666L662.500 388.500Z M659 455.500H666L662.500 461.500Z M659 528H666L662.500 534Z"/>
<path d="M779 382.500H786L782.500 388.500Z M779 455.500H786L782.500 461.500Z M779 528H786L782.500 534Z"/>
<path d="M899 382.500H906L902.500 388.500Z M899 455.500H906L902.500 461.500Z M899 528H906L902.500 534Z"/>
<path d="M628 319V326L634 322.500Z M748 319V326L754 322.500Z M868 319V326L874 322.500Z"/>
</g>
<!-- start node -->
<rect x="508" y="171.500" width="67" height="37.500" rx="14" fill="#fff" stroke="#8fe0bc" stroke-width="1.100"/>
<path d="M533 181.500V199.500L550.500 190.500Z" fill="#5ad4a0"/>
<!-- thread nodes -->
<path d="M495.500 316.500H589V339.500L542.500 352L495.500 339.500Z" fill="#fff" stroke="#8fe0bc" stroke-width="1.100" stroke-linejoin="round"/>
<path d="M495 316.500H513V344.200L495 339.500Z" fill="#58d3a0"/>
<circle cx="541.500" cy="344.500" r="4.500" fill="#fff" stroke="#7adcb4" stroke-width="1"/><path d="M539 344.500H544" stroke="#7adcb4" stroke-width="1"/>
<g stroke="#8fe0bc" stroke-width="1.100" stroke-linejoin="round" fill="#fff"><path d="M634.500 316.500H691V327.500L662.500 338.500L634.500 327.500Z"/><path d="M754.500 316.500H811V327.500L782.500 338.500L754.500 327.500Z"/><path d="M874.500 316.500H931V327.500L902.500 338.500L874.500 327.500Z"/></g>
<g fill="#58d3a0"><path d="M634 316.500H662.500V338.500L634 327.500Z"/><path d="M754 316.500H782.500V338.500L754 327.500Z"/><path d="M874 316.500H902.500V338.500L874 327.500Z"/></g>
<g font-family="Liberation Sans,sans-serif" font-size="11" fill="#14182a" text-anchor="middle"><text x="504.500" y="334">1</text><text x="657" y="328">2</text><text x="777" y="328">3</text><text x="897" y="328">4</text></g>
<text x="549" y="335" font-family="Liberation Mono,monospace" font-size="13" letter-spacing="-0.800" text-anchor="middle" fill="#222">Thread1</text>
<!-- selection bracket -->
<g fill="none" stroke="#4fd09a" stroke-width="3" stroke-linecap="butt"><path d="M757.500 382.500H736Q729.800 382.500 729.800 388.700V395.500"/><path d="M807 382.500H829Q835.300 382.500 835.300 388.700V395.500"/><path d="M757.500 431.500H736Q729.800 431.500 729.800 425.300V413"/><path d="M807 431.500H829Q835.300 431.500 835.300 425.300V413"/></g>
</svg>
<div class="nd" style="left:495px;top:243.500px"><i></i><b>Initialize</b></div>
<div class="nd" style="left:495px;top:388px"><i></i><b>Recheck...</b></div>
<div class="nd" style="left:615px;top:388px"><i></i><b>Recheck...</b></div>
<div class="nd" style="left:735px;top:388px"><i></i><b>Recheck...</b></div>
<div class="nd" style="left:855px;top:388px"><i></i><b>Recheck...</b></div>
<div class="nd" style="left:495px;top:460.500px"><i></i><b>Glue1_3...</b></div>
<div class="nd" style="left:615px;top:460.500px"><i></i><b>Glue2_3...</b></div>
<div class="nd" style="left:735px;top:460.500px"><i></i><b>Glue3_3...</b></div>
<div class="nd" style="left:855px;top:460.500px"><i></i><b>Glue4_3...</b></div>
<div class="nd" style="left:495px;top:569px"><i></i><b>total</b></div>
<!-- minimap -->
<div class="abs" style="left:1063px;top:560px;width:177px;height:81px;background:#fff;border:1px solid #7a7a80;border-top:none"></div>
<div class="abs" style="left:1063px;top:560px;width:177px;height:58.500px;border:1px solid #2a9c9c"></div>
<svg style="left:1063px;top:560px" width="177" height="81" viewBox="0 0 177 81">
<rect x="1.500" y="1.500" width="7" height="7" fill="#fff" stroke="#333" stroke-width="1"/><path d="M3 5H7M5 3.500V6.500" stroke="#555" stroke-width="0.700"/>
<g stroke="#555" stroke-width="0.500" fill="none"><path d="M22 6V62M22 20.500H100M48 20.500V40M74 20.500V40M100 20.500V40M22 45H100V40"/></g>
<g fill="#4fce96"><path d="M17 2.500H27Q29 4 27 5.500H17Q15 4 17 2.500Z" fill="#fff" stroke="#7adcb4" stroke-width="0.400"/><path d="M20.500 2.800V5.200L23.500 4Z"/>
<rect x="13" y="10" width="4" height="4"/><rect x="13" y="18" width="4" height="3"/><rect x="41" y="18" width="8" height="2.500"/><rect x="67" y="18" width="8" height="2.500"/><rect x="93" y="18" width="8" height="2.500"/>
<rect x="13" y="27" width="4" height="4.500"/><rect x="39" y="27" width="4" height="4.500"/><rect x="65" y="27" width="4" height="4.500"/><rect x="91" y="27" width="4" height="4.500"/>
<rect x="13" y="35.500" width="4" height="4.500"/><rect x="39" y="35.500" width="4" height="4.500"/><rect x="65" y="35.500" width="4" height="4.500"/><rect x="91" y="35.500" width="4" height="4.500"/>
<rect x="13" y="49" width="4" height="4.500"/></g>
<g fill="none" stroke="#a8e8cc" stroke-width="0.500"><rect x="13" y="10" width="20" height="4"/><rect x="13" y="27" width="20" height="4.500"/><rect x="39" y="27" width="20" height="4.500"/><rect x="65" y="27" width="20" height="4.500"/><rect x="91" y="27" width="20" height="4.500"/><rect x="13" y="35.500" width="20" height="4.500"/><rect x="39" y="35.500" width="20" height="4.500"/><rect x="65" y="35.500" width="20" height="4.500"/><rect x="91" y="35.500" width="20" height="4.500"/><rect x="13" y="49" width="20" height="4.500"/><rect x="13" y="58" width="20" height="4"/></g>
<circle cx="15" cy="60" r="1.800" fill="none" stroke="#4fce96" stroke-width="0.800"/>
<g stroke="#e03030" fill="none" stroke-width="0.600"><rect x="13" y="66" width="20" height="4.500"/><ellipse cx="22.500" cy="76.500" rx="4.500" ry="1.800"/></g><circle cx="15" cy="68.300" r="2" fill="#e03030"/><rect x="20.500" y="75.800" width="4" height="1.400" fill="#e03030"/>
</svg>
<!-- canvas scrollbars -->
<div class="abs" style="left:1240px;top:163px;width:17px;height:479px;background:#f3f3f5"></div>
<div class="abs" style="left:1240.500px;top:182px;width:15.500px;height:310px;background:linear-gradient(90deg,#eeeeee,#e2e2e4 50%,#d4d4d6);border:1px solid #c0c0c4"></div>
<svg style="left:1242px;top:167px" width="12" height="8" viewBox="0 0 12 8"><path d="M0.500 7H11.500L6 1Z" fill="#6a6e7c"/></svg>
<svg style="left:1242px;top:629px" width="12" height="8" viewBox="0 0 12 8"><path d="M0.500 1H11.500L6 7Z" fill="#6a6e7c"/></svg>
<svg style="left:1244px;top:332px" width="8" height="9" viewBox="0 0 8 9"><path d="M0 1H8M0 4.500H8M0 8H8" stroke="#4c5060" stroke-width="1.100"/></svg>
<div class="abs" style="left:443px;top:642px;width:814px;height:17px;background:#f3f3f5"></div>
<div class="abs" style="left:462px;top:642.500px;width:749px;height:16px;background:linear-gradient(#eeeeee,#e2e2e4 50%,#d4d4d6);border:1px solid #c0c0c4"></div>
<svg style="left:447px;top:644px" width="8" height="12" viewBox="0 0 8 12"><path d="M7 0.500V11.500L1 6Z" fill="#6a6e7c"/></svg>
<svg style="left:1227px;top:644px" width="8" height="12" viewBox="0 0 8 12"><path d="M1 0.500V11.500L7 6Z" fill="#6a6e7c"/></svg>
<svg style="left:831px;top:646px" width="10" height="8" viewBox="0 0 10 8"><path d="M1 0V8M4.500 0V8M8 0V8" stroke="#4c5060" stroke-width="1.100"/></svg>
<!-- BOTTOM PANEL -->
<style>
.th{letter-spacing:0.150px;position:absolute;top:718px;height:28px;line-height:30px;text-align:center;font-weight:bold;font-size:12.500px;color:#1a1e2e;background:linear-gradient(#f6f6f6,#ececec 45%,#dcdcdc);border-right:1px solid #c8c8cc;border-bottom:1px solid #c4c4c8}
.td{letter-spacing:0.200px;position:absolute;height:27px;line-height:29.500px;font-size:12.300px;color:#1a1e2e;white-space:nowrap;overflow:hidden;border-right:1px solid #d4d4d8;border-bottom:1px solid #d4d4d8;text-align:center}
.dot{position:absolute;left:759px;width:16px;height:16px;border-radius:50%;background:#4ccf94}
.btab{position:absolute;top:864.500px;height:30px;line-height:31px;text-align:center;font-size:12.300px;color:#1a1e2e;background:#f0f0f0;border:1px solid #a9abb3;border-top:1px solid #a9abb3}
</style>
<div class="abs" style="left:433px;top:673px;width:833px;height:192px;background:#fff;border:1px solid #a3a5ad"></div>
<div class="abs" style="left:444px;top:684px;width:441px;height:28px;border:1px solid #bec0c8;border-radius:3.500px;background:#fff"></div>
<svg style="left:850px;top:672.500px" width="52" height="21" viewBox="0 0 52 21"><path d="M0.500 0H50.500A25 20 0 0 1 0.500 0Z" fill="#7e808c" opacity="0.560"/><path d="M19.300 4L25.500 10L31.700 4M19.300 9L25.500 15L31.700 9" fill="none" stroke="#fff" stroke-width="1.300"/></svg>
<svg style="left:450px;top:686px" width="24" height="24" viewBox="0 0 24 24"><circle cx="9" cy="9.500" r="7" fill="none" stroke="#777a84" stroke-width="1.600"/><path d="M14 14.500L21 21.500" stroke="#777a84" stroke-width="2.200"/></svg>
<div class="t" style="left:476.500px;top:691px;font-size:12.300px;letter-spacing:0.300px;color:#8a8c96">Search</div>
<!-- table -->
<div class="abs" style="left:444px;top:717.500px;width:794px;height:137px;border:1px solid #c4c4c8;background:#fff"></div>
<div class="th" style="left:445px;width:70.500px">Type</div>
<div class="th" style="left:515.500px;width:229.500px">Variable Name</div>
<div class="th" style="left:745px;width:44px">State</div>
<div class="th" style="left:789px;width:429.500px">Value</div>
<div class="td" style="left:445px;top:746px;width:70.500px">N</div><div class="td" style="left:515.500px;top:746px;width:229.500px;text-align:left;padding-left:3px">Recheck_Glue3.Three_Dimension_I...</div><div class="td" style="left:745px;top:746px;width:44px"></div><div class="td" style="left:789px;top:746px;width:429.500px">0</div>
<div class="td" style="left:445px;top:773px;height:28px;width:70.500px">3D_PL</div><div class="td" style="left:515.500px;top:773px;height:28px;width:229.500px;text-align:left;padding-left:3px">Recheck_Glue3.Three_Dimension_I...</div><div class="td" style="left:745px;top:773px;height:28px;width:44px"></div><div class="td" style="left:789px;top:773px;height:28px;width:429.500px">(0,0,1,0)</div>
<div class="td" style="left:445px;top:801px;line-height:28.500px;width:70.500px">P</div><div class="td" style="left:515.500px;top:801px;line-height:28.500px;width:229.500px;text-align:left;padding-left:3px">Recheck_Glue3.Line_Detection_L.mi...</div><div class="td" style="left:745px;top:801px;line-height:28.500px;width:44px"></div><div class="td" style="left:789px;top:801px;line-height:28.500px;width:429.500px">(1467.60569,7434.093331)</div>
<div class="td" style="left:445px;top:828px;height:26px;line-height:28.500px;width:70.500px;border-bottom:none">P</div><div class="td" style="left:515.500px;top:828px;height:26px;line-height:28.500px;width:229.500px;text-align:left;padding-left:3px;border-bottom:none">Recheck_Glue3.Line_Detection_1.mi...</div><div class="td" style="left:745px;top:828px;height:26px;line-height:28.500px;width:44px;border-bottom:none"></div><div class="td" style="left:789px;top:828px;height:26px;line-height:28.500px;width:429.500px;border-bottom:none">(1410.253747,2382.51)</div>
<div class="dot" style="top:752px"></div><div class="dot" style="top:779.300px"></div><div class="dot" style="top:806.700px"></div><div class="dot" style="top:834px"></div>
<!-- table scrollbar -->
<div class="abs" style="left:1219px;top:718.500px;width:18px;height:135.500px;background:#f3f3f5"></div>
<div class="abs" style="left:1220px;top:737.500px;width:16px;height:36px;background:linear-gradient(90deg,#eeeeee,#e2e2e4 50%,#d4d4d6);border:1px solid #c0c0c4"></div>
<svg style="left:1222px;top:722px" width="12" height="8" viewBox="0 0 12 8"><path d="M0.500 7H11.500L6 1Z" fill="#6a6e7c"/></svg>
<svg style="left:1222px;top:842px" width="12" height="8" viewBox="0 0 12 8"><path d="M0.500 1H11.500L6 7Z" fill="#6a6e7c"/></svg>
<svg style="left:1224px;top:750.500px" width="8" height="9" viewBox="0 0 8 9"><path d="M0 1H8M0 4.500H8M0 8H8" stroke="#4c5060" stroke-width="1.100"/></svg>
<!-- bottom tabs -->
<div class="btab" style="left:433px;width:112px">Variable</div>
<div class="btab" style="left:544.500px;width:111px;background:#fff;border-top-color:#fff;top:864px;height:31px;line-height:34px">Result</div>
<div class="btab" style="left:655px;width:112px">Log</div>
<div class="btab" style="left:766.500px;width:112px">Error</div>
<div class="btab" style="left:878px;width:111px">Monitor</div>
<svg style="left:1140px;top:876px" width="18" height="18" viewBox="0 0 18 18"><circle cx="8" cy="8" r="7" fill="none" stroke="#2a2e3c" stroke-width="1"/><path d="M8 3.500V8.500H11.500" fill="none" stroke="#2a2e3c" stroke-width="1"/><ellipse cx="12.500" cy="14.500" rx="3.500" ry="2.200" fill="#d0d1d6" stroke="#2a2e3c" stroke-width="0.800"/><circle cx="12.500" cy="14.500" r="1.100" fill="#2a2e3c"/></svg>
<div class="t" style="left:1160.500px;top:878px;font-size:12.300px;color:#1a1e2e">Total time:0.00ms</div>
<!-- RIGHT PANEL -->
<style>
.grp{position:absolute;left:1281.500px;width:399.500px;border:1px solid #e2e3e8;border-radius:5px;background:#fff}
.inp{letter-spacing:0.220px;position:absolute;border:1px solid #a4a6ae;border-radius:3.500px;background:#fff;font-size:12.300px;color:#1a1e2e;white-space:nowrap;padding-left:2px}
.lb{letter-spacing:0.220px;position:absolute;white-space:nowrap;font-size:12.300px;line-height:14px;color:#1a1e2e}
.ab{position:absolute;top:399px;width:42.800px;height:39px;border:1px solid #b6b7bc;border-radius:3px;background:linear-gradient(#e8e8ea,#e0e0e2);box-shadow:0 0.500px 0 rgba(0,0,0,.12)}
.ab span{position:absolute;left:-4px;right:-4px;top:20.500px;text-align:center;font-size:12.300px;line-height:14px;color:#8e9098;white-space:nowrap}
.ab svg{left:10.500px;top:1px}
.row{letter-spacing:0.220px;position:absolute;left:1293px;width:358px;height:52.800px;border-bottom:1px solid #dcdce0}
.row .n{position:absolute;left:8px;top:19.900px;font-size:12.300px;line-height:14px;color:#1a1e2e}
.row .d{position:absolute;left:29px;top:20.400px;width:12.500px;height:12.500px;border-radius:50%;background:#8a8c94}
.row .a{position:absolute;left:79.500px;top:6.900px;font-size:12.300px;line-height:14px;color:#1a1e2e;white-space:nowrap}
.row .m{position:absolute;left:79.500px;top:33.400px;font-size:12.300px;line-height:14px;color:#1a1e2e;white-space:nowrap}
.row .ok{position:absolute;left:324px;top:18.900px;width:16px;height:16px;border-radius:50%;background:#1fc8a0;color:#fff;font-size:8.500px;font-weight:bold;line-height:16.500px;text-align:center;letter-spacing:-0.300px}
.row svg{left:296px;top:17.900px}
</style>
<div class="tab on" style="left:1272px;top:93px;width:110px;height:34px;line-height:32px">Block Property</div>
<div class="tab" style="left:1383px;top:95px;width:110px;height:32px;line-height:30px">Resources</div>
<div class="abs" style="left:1271px;top:126px;width:420px;height:767px;background:#fff;border:1px solid #a3a5ad;border-bottom:none"></div>
<div class="abs" style="left:1272px;top:125px;width:110px;height:3px;background:#fff"></div>
<!-- groups -->
<div class="grp" style="top:136px;height:48.500px"></div>
<div class="lb" style="left:1290.500px;top:153.500px">Block Name</div>
<div class="inp" style="left:1390px;top:145px;width:282px;height:29px;line-height:29px">Recheck_Glue3</div>
<div class="grp" style="top:190.500px;height:49px"></div>
<div class="lb" style="left:1292px;top:208.500px">Block Note</div>
<div class="inp" style="left:1391px;top:201px;width:279.500px;height:28.500px;line-height:27.500px;color:#9a9ca4">Please input block remarks</div>
<div class="grp" style="top:246px;height:42.500px"></div>
<div class="lb" style="left:1290.500px;top:261.500px">Enabled Block</div>
<div class="abs" style="left:1619px;top:255px;width:53px;height:26.500px;border-radius:13.250px;background:#4ccf94"></div>
<div class="abs" style="left:1649.500px;top:259px;width:18px;height:18px;border-radius:50%;background:#fff"></div>
<div class="grp" style="top:294.500px;height:53.500px"></div>
<div class="lb" style="left:1292px;top:314.500px">Image Window</div>
<div class="inp" style="left:1391px;top:305px;width:279.500px;height:32px;line-height:31px;border-radius:2px">Image Window2</div>
<div class="abs" style="left:1650.500px;top:306px;width:19px;height:30px;background:#8a8c94;border-radius:0 2px 2px 0"></div>
<svg style="left:1655px;top:318px" width="10" height="6" viewBox="0 0 10 6"><path d="M0.500 0.500H9.500L5 5.500Z" fill="#fff"/></svg>
<!-- algorithm list -->
<div class="grp" style="top:353.500px;height:478px"></div>
<div class="lb" style="left:1292px;top:371px">Algorithm List</div>
<div class="ab" style="left:1294px"><svg width="20" height="20" viewBox="0 0 20 20"><path d="M10 3H4.500Q2.500 3 2.500 5V15.500Q2.500 17.500 4.500 17.500H15Q17 17.500 17 15.500V10" fill="none" stroke="#68696e" stroke-width="1.400"/><path d="M7 13.500L8 9.500L15 2.500L18 5.500L11 12.500Z" fill="#68696e"/><path d="M8.800 10.500L10 11.700" stroke="#e4e4e6" stroke-width="0.800"/></svg><span>Edit</span></div>
<div class="ab" style="left:1340.750px"><svg width="20" height="20" viewBox="0 0 20 20"><path d="M2.500 2.500V17.500L17.500 10Z" fill="#68696e" stroke="#68696e" stroke-width="1.500" stroke-linejoin="round"/></svg><span>Run</span></div>
<div class="ab" style="left:1387.500px"><svg width="20" height="20" viewBox="0 0 20 20"><circle cx="10" cy="10" r="3.300" fill="#68696e"/></svg><span>BP</span></div>
<div class="ab" style="left:1434.250px"><svg width="20" height="20" viewBox="0 0 20 20" style="top:2px"><circle cx="10" cy="10" r="7.300" fill="none" stroke="#8a8c94" stroke-width="1.800"/><path d="M5 15L15 5" stroke="#8a8c94" stroke-width="1.800"/></svg><span style="top:22.500px">Enable</span></div>
<div class="ab" style="left:1481px"><svg width="20" height="20" viewBox="0 0 20 20"><path d="M4.500 12.500Q2 12.500 2 10.500V3.500Q2 1.500 4 1.500H11Q13 1.500 13 3.500V4.500" fill="none" stroke="#68696e" stroke-width="1.500"/><rect x="6" y="5.500" width="12.500" height="13" rx="2" fill="#68696e"/><path d="M9 10H15.500M9 13.500H15.500" stroke="#e4e4e6" stroke-width="1.300"/></svg><span style="left:-2px;right:-6px;letter-spacing:0.300px">Copy</span></div>
<div class="ab" style="left:1527.750px"><svg width="20" height="20" viewBox="0 0 20 20"><path d="M9 1.500L10.500 10L15 14M2.500 7.500L10.500 10L8.500 14.500" fill="none" stroke="#68696e" stroke-width="1.100"/><circle cx="16" cy="15.500" r="2" fill="none" stroke="#68696e" stroke-width="1.100"/><circle cx="8" cy="16.500" r="2" fill="none" stroke="#68696e" stroke-width="1.100"/></svg><span>Cut</span></div>
<div class="ab" style="left:1574.500px"><svg width="20" height="20" viewBox="0 0 20 20"><path d="M6.500 15.500H4Q2 15.500 2 13.500V4Q2 2 4 2H10.500Q12.500 2 12.500 4V6" fill="none" stroke="#68696e" stroke-width="1.500"/><rect x="5" y="1" width="4.500" height="2.300" fill="#68696e"/><path d="M9 8H14.500L18.500 11.500V18.500H9Z" fill="#68696e"/><path d="M11 13.500H16.500M11 16H16.500" stroke="#e4e4e6" stroke-width="1"/></svg><span>Paste</span></div>
<div class="ab" style="left:1621.250px"><svg width="20" height="20" viewBox="0 0 20 20"><path d="M2.500 5H17.500" stroke="#68696e" stroke-width="1.600"/><path d="M7 4.500V2.500H13V4.500" fill="none" stroke="#68696e" stroke-width="1.400"/><path d="M4 7H16L15 18.500H5Z" fill="#68696e"/><path d="M7.500 9V16.500M10 9V16.500M12.500 9V16.500" stroke="#e4e4e6" stroke-width="0.900"/></svg><span style="left:-1.500px;right:-6.500px;letter-spacing:0.250px">Delete</span></div>
<!-- list -->
<div class="abs" style="left:1292.500px;top:445px;width:377.500px;height:376.500px;border:1px solid #ececf0;border-bottom:none;background:#fff"></div>
<div class="row" style="top:446.20px"><span class="n">13</span><span class="d"></span><span class="a">Line_Detection_8</span><span class="m">0.878ms</span><svg width="18" height="18" viewBox="0 0 18 18"><path d="M10.500 2H3Q1.500 2 1.500 3.500V13.500Q1.500 15 3 15H8" fill="none" stroke="#1fc8a0" stroke-width="1.300"/><path d="M10.500 2H13Q14.500 2 14.500 3.500V6" fill="none" stroke="#1fc8a0" stroke-width="1.300"/><path d="M2 14.500V11L6 6.500L9 10L8 14.500Z" fill="#1fc8a0"/><circle cx="11.500" cy="4.800" r="1.100" fill="#1fc8a0"/><circle cx="12.500" cy="12.500" r="4.500" fill="#fff" stroke="#1fc8a0" stroke-width="1"/><path d="M12.500 9.500V15.500M10.500 11L12.500 9.300L14.500 11M10.500 14L12.500 15.700L14.500 14" fill="none" stroke="#1fc8a0" stroke-width="0.800"/></svg><span class="ok">OK</span></div>
<div class="row" style="top:499.07px"><span class="n">14</span><span class="d"></span><span class="a">Line_Detection_9</span><span class="m">1.085ms</span><svg width="18" height="18" viewBox="0 0 18 18"><path d="M10.500 2H3Q1.500 2 1.500 3.500V13.500Q1.500 15 3 15H8" fill="none" stroke="#1fc8a0" stroke-width="1.300"/><path d="M10.500 2H13Q14.500 2 14.500 3.500V6" fill="none" stroke="#1fc8a0" stroke-width="1.300"/><path d="M2 14.500V11L6 6.500L9 10L8 14.500Z" fill="#1fc8a0"/><circle cx="11.500" cy="4.800" r="1.100" fill="#1fc8a0"/><circle cx="12.500" cy="12.500" r="4.500" fill="#fff" stroke="#1fc8a0" stroke-width="1"/><path d="M12.500 9.500V15.500M10.500 11L12.500 9.300L14.500 11M10.500 14L12.500 15.700L14.500 14" fill="none" stroke="#1fc8a0" stroke-width="0.800"/></svg><span class="ok">OK</span></div>
<div class="row" style="top:551.94px"><span class="n">15</span><span class="d"></span><span class="a">Line_Detection_10</span><span class="m">0.922ms</span><svg width="18" height="18" viewBox="0 0 18 18"><path d="M10.500 2H3Q1.500 2 1.500 3.500V13.500Q1.500 15 3 15H8" fill="none" stroke="#1fc8a0" stroke-width="1.300"/><path d="M10.500 2H13Q14.500 2 14.500 3.500V6" fill="none" stroke="#1fc8a0" stroke-width="1.300"/><path d="M2 14.500V11L6 6.500L9 10L8 14.500Z" fill="#1fc8a0"/><circle cx="11.500" cy="4.800" r="1.100" fill="#1fc8a0"/><circle cx="12.500" cy="12.500" r="4.500" fill="#fff" stroke="#1fc8a0" stroke-width="1"/><path d="M12.500 9.500V15.500M10.500 11L12.500 9.300L14.500 11M10.500 14L12.500 15.700L14.500 14" fill="none" stroke="#1fc8a0" stroke-width="0.800"/></svg><span class="ok">OK</span></div>
<div class="row" style="top:604.81px"><span class="n">16</span><span class="d"></span><span class="a">Height_Measurement_1</span><span class="m">6.135ms</span><svg width="18" height="18" viewBox="0 0 18 18"><path d="M10.500 2H3Q1.500 2 1.500 3.500V13.500Q1.500 15 3 15H8" fill="none" stroke="#1fc8a0" stroke-width="1.300"/><path d="M10.500 2H13Q14.500 2 14.500 3.500V6" fill="none" stroke="#1fc8a0" stroke-width="1.300"/><path d="M2 14.500V11L6 6.500L9 10L8 14.500Z" fill="#1fc8a0"/><circle cx="11.500" cy="4.800" r="1.100" fill="#1fc8a0"/><circle cx="12.500" cy="12.500" r="4.500" fill="#fff" stroke="#1fc8a0" stroke-width="1"/><path d="M12.500 9.500V15.500M10.500 11L12.500 9.300L14.500 11M10.500 14L12.500 15.700L14.500 14" fill="none" stroke="#1fc8a0" stroke-width="0.800"/></svg><span class="ok">OK</span></div>
<div class="row" style="top:657.68px"><span class="n">17</span><span class="d"></span><span class="a">Scriptor_1</span><span class="m">1.092ms</span><span class="ok">OK</span></div>
<div class="row" style="top:710.55px"><span class="n">18</span><span class="d"></span><span class="a">Scriptor_2</span><span class="m">0.572ms</span><span class="ok">OK</span></div>
<div class="row" style="top:763.42px"><span class="n">19</span><span class="d"></span><span class="a">Overlay_1</span><span class="m">1.714ms</span><svg width="18" height="18" viewBox="0 0 18 18"><path d="M10.500 2H3Q1.500 2 1.500 3.500V13.500Q1.500 15 3 15H8" fill="none" stroke="#1fc8a0" stroke-width="1.300"/><path d="M10.500 2H13Q14.500 2 14.500 3.500V6" fill="none" stroke="#1fc8a0" stroke-width="1.300"/><path d="M2 14.500V11L6 6.500L9 10L8 14.500Z" fill="#1fc8a0"/><circle cx="11.500" cy="4.800" r="1.100" fill="#1fc8a0"/><circle cx="12.500" cy="12.500" r="4.500" fill="#fff" stroke="#1fc8a0" stroke-width="1"/><path d="M12.500 9.500V15.500M10.500 11L12.500 9.300L14.500 11M10.500 14L12.500 15.700L14.500 14" fill="none" stroke="#1fc8a0" stroke-width="0.800"/></svg><span class="ok">OK</span></div>
<div class="abs" style="left:1293px;top:815.500px;width:358px;height:6px;background:#fff"></div>
<div class="abs" style="left:1293px;top:820.500px;width:376px;height:1px;background:#e2e3e8"></div>
<!-- list scrollbar -->
<div class="abs" style="left:1651.500px;top:446px;width:18px;height:375px;background:#f3f3f5"></div>
<div class="abs" style="left:1652.500px;top:678.500px;width:16px;height:124px;background:linear-gradient(90deg,#eeeeee,#e2e2e4 50%,#d4d4d6);border:1px solid #c0c0c4"></div>
<svg style="left:1654.500px;top:451px" width="12" height="8" viewBox="0 0 12 8"><path d="M0.500 7H11.500L6 1Z" fill="#6a6e7c"/></svg>
<svg style="left:1654.500px;top:809px" width="12" height="8" viewBox="0 0 12 8"><path d="M0.500 1H11.500L6 7Z" fill="#6a6e7c"/></svg>
<svg style="left:1656.500px;top:736.500px" width="8" height="9" viewBox="0 0 8 9"><path d="M0 1H8M0 4.500H8M0 8H8" stroke="#4c5060" stroke-width="1.100"/></svg>
<!-- operator note -->
<div class="grp" style="top:839px;height:48.500px"></div>
<div class="lb" style="left:1292px;top:856px">Operator Note</div>
<div class="inp" style="left:1391px;top:849.500px;width:279px;height:27px;line-height:25px;color:#9a9ca4">Please input operator remarks</div>
<!-- right collapse handle -->
<svg style="left:1270px;top:496px" width="20" height="50" viewBox="0 0 20 50"><path d="M0 0.500A19.500 24.500 0 0 1 0 49.500Z" fill="#7e808c" opacity="0.620"/><path d="M3 19.500L8 25L3 30.500M8.500 19.500L13.500 25L8.500 30.500" fill="none" stroke="#fff" stroke-width="1.300"/></svg>
<div class="abs" style="left:0;top:893px;width:1691px;height:2px;background:#111"></div>
</div></body></html>
